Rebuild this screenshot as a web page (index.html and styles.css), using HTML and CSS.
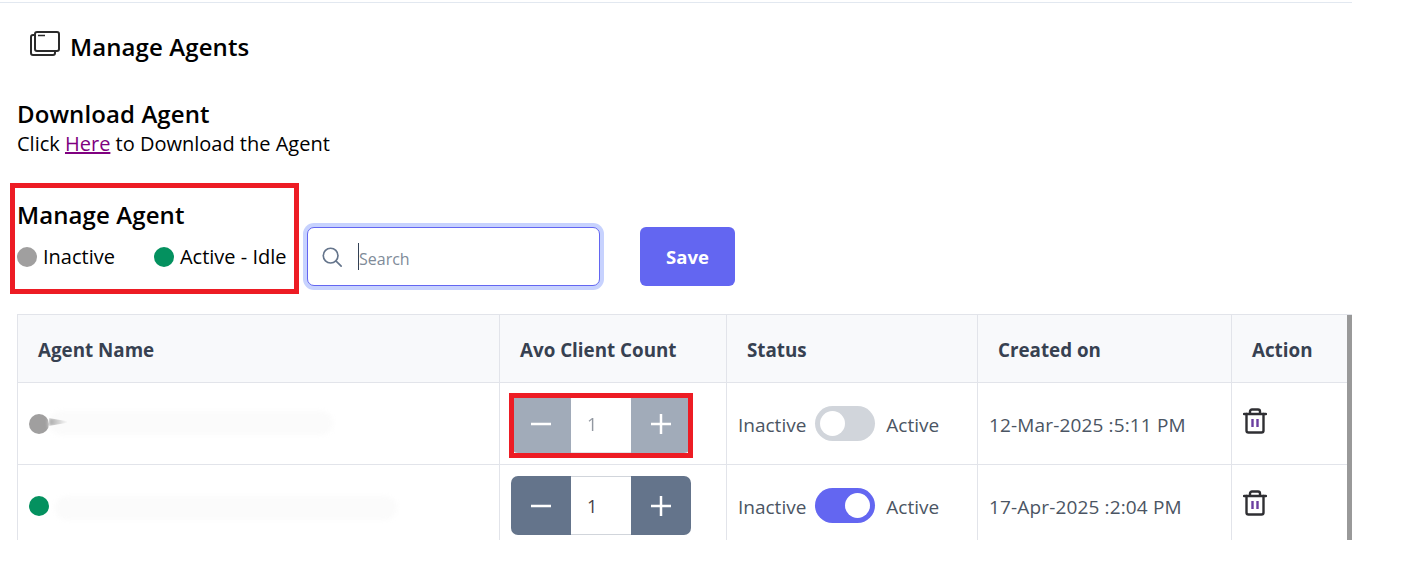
FILE: index.html
```html
<!DOCTYPE html>
<html lang="en">
<head>
<meta charset="utf-8">
<title>Manage Agents</title>
<link rel="stylesheet" href="styles.css">
</head>
<body>
<main class="page">
  <header class="title-row">
    <svg class="title-icon" viewBox="0 0 30 26" fill="none" stroke="#2b2b2b" stroke-width="2">
      <rect x="5" y="1" width="24" height="19" rx="2"/>
      <path d="M5 5h1M8 4.500h7" stroke-width="1.500"/>
      <path d="M5 4H3a2 2 0 0 0-2 2v16a2 2 0 0 0 2 2h20a2 2 0 0 0 2-2v-2"/>
    </svg>
    <h1 class="title">Manage Agents</h1>
  </header>

  <section class="download">
    <h2 class="heading">Download Agent</h2>
    <p class="download-text">Click <a class="link" href="#">Here</a> to Download the Agent</p>
  </section>

  <section class="toolbar">
    <div class="legend-block">
      <span class="annotation annotation-legend"></span>
      <h2 class="heading">Manage Agent</h2>
      <div class="legend">
        <span class="legend-item"><i class="dot dot-grey"></i>Inactive</span>
        <span class="legend-item"><i class="dot dot-green"></i>Active - Idle</span>
      </div>
    </div>
    <label class="search">
      <svg class="search-icon" viewBox="0 0 24 24" fill="none" stroke="#64748b" stroke-width="1.800" stroke-linecap="round">
        <circle cx="10.500" cy="10.500" r="8"/>
        <path d="M16.500 16.500 22 22"/>
      </svg>
      <span class="caret"></span>
      <input class="search-input" type="text" placeholder="Search">
    </label>
    <button class="save" type="button">Save</button>
  </section>

  <section class="table">
    <div class="row row-head">
      <div class="cell head">Agent Name</div>
      <div class="cell head">Avo Client Count</div>
      <div class="cell head">Status</div>
      <div class="cell head">Created on</div>
      <div class="cell head">Action</div>
    </div>

    <div class="row row-one">
      <div class="cell name">
        <i class="dot dot-grey"></i>
        <span class="smear smear-a"></span>
        <span class="smudge"></span>
      </div>
      <div class="cell count">
        <span class="annotation annotation-stepper"></span>
        <div class="stepper stepper-off">
          <button class="step" type="button"><svg viewBox="0 0 20 20"><path d="M0 10h20"/></svg></button>
          <span class="step-value">1</span>
          <button class="step" type="button"><svg viewBox="0 0 20 20"><path d="M0 10h20M10 0v20"/></svg></button>
        </div>
      </div>
      <div class="cell status">
        <span class="status-label">Inactive</span>
        <span class="toggle"><span class="knob"></span></span>
        <span class="status-label">Active</span>
      </div>
      <div class="cell date">12-Mar-2025 :5:11 PM</div>
      <div class="cell action">
        <svg class="trash" viewBox="0 0 24 26" fill="none" stroke="#2f2f33" stroke-width="2.400" stroke-linecap="round" stroke-linejoin="round">
          <path d="M1 6h22M7 6V3.500A2 2 0 0 1 9 1.500h6a2 2 0 0 1 2 2V6"/>
          <path d="M3.500 6v16.500a2 2 0 0 0 2 2h13a2 2 0 0 0 2-2V6"/>
          <path d="M9.500 11v8M14.500 11v8" stroke="#6b3fa0" stroke-linecap="butt"/>
        </svg>
      </div>
    </div>

    <div class="row row-two">
      <div class="cell name">
        <i class="dot dot-green"></i>
        <span class="smear smear-b"></span>
      </div>
      <div class="cell count">
        <div class="stepper">
          <button class="step" type="button"><svg viewBox="0 0 20 20"><path d="M0 10h20"/></svg></button>
          <span class="step-value step-value-on">1</span>
          <button class="step" type="button"><svg viewBox="0 0 20 20"><path d="M0 10h20M10 0v20"/></svg></button>
        </div>
      </div>
      <div class="cell status">
        <span class="status-label">Inactive</span>
        <span class="toggle toggle-on"><span class="knob"></span></span>
        <span class="status-label">Active</span>
      </div>
      <div class="cell date">17-Apr-2025 :2:04 PM</div>
      <div class="cell action">
        <svg class="trash" viewBox="0 0 24 26" fill="none" stroke="#2f2f33" stroke-width="2.400" stroke-linecap="round" stroke-linejoin="round">
          <path d="M1 6h22M7 6V3.500A2 2 0 0 1 9 1.500h6a2 2 0 0 1 2 2V6"/>
          <path d="M3.500 6v16.500a2 2 0 0 0 2 2h13a2 2 0 0 0 2-2V6"/>
          <path d="M9.500 11v8M14.500 11v8" stroke="#6b3fa0" stroke-linecap="butt"/>
        </svg>
      </div>
    </div>
    <span class="scrollbar"></span>
  </section>
</main>
</body>
</html>
```

FILE: styles.css
```css
* { box-sizing: border-box; }
html, body { margin: 0; padding: 0; background: #fff; }
body { font-family: "Open Sans", "Noto Sans", sans-serif; color: #000; overflow: hidden; }

.page { width: 1352px; margin-top: 2px; border-top: 1px solid #e2e8f0; padding-left: 17px; }

.title-row { display: flex; align-items: center; gap: 10px; height: 56px; margin-top: 16px; padding-left: 13px; }
.title-icon { width: 30px; height: 26px; flex: none; margin-top: -6px; }
.title { margin: 0; font-size: 24px; font-weight: 600; line-height: 32px; letter-spacing: 0.1px; }

.heading { margin: 0; font-size: 24px; font-weight: 600; line-height: 32px; letter-spacing: 0.1px; }
.download { margin-top: 23px; }
.download-text { margin: 1px 0 0; font-size: 20px; line-height: 26px; }
.link { color: #800080; text-decoration: underline; }

.toolbar { display: flex; align-items: flex-start; margin-top: 40px; position: relative; }
.legend-block { position: relative; width: 290px; padding-top: 2px; }
.annotation { position: absolute; border: 5px solid #ed1c24; pointer-events: none; z-index: 2; }
.annotation-legend { left: -7px; top: -14px; width: 289px; height: 111px; }
.legend { display: flex; gap: 39px; margin-top: 13px; }
.legend-item { display: flex; align-items: center; gap: 6px; font-size: 20px; line-height: 26px; }

.dot { display: block; width: 20px; height: 20px; border-radius: 50%; flex: none; }
.dot-grey { background: #a09f9f; }
.dot-green { background: #04915f; }

.search { display: flex; align-items: center; width: 293px; height: 59px; margin-top: 30px; border: 1px solid #6366f1; border-radius: 7px; box-shadow: 0 0 0 4px #c7d2fe; background: #fff; padding-left: 14px; position: relative; }
.search-icon { width: 22px; height: 22px; flex: none; margin-left: -1px; }
.caret { width: 1px; height: 27px; background: #334155; margin-left: 15px; flex: none; }
.search-input { border: 0; outline: 0; padding: 4px 0 0; width: 200px; font: 16px "Open Sans", sans-serif; color: #374151; background: transparent; }
.search-input::placeholder { color: #808b99; opacity: 1; }

.save { width: 95px; height: 59px; margin-top: 30px; margin-left: 40px; border: 0; border-radius: 6px; background: #6366f1; color: #fff; font: 700 18.500px "Open Sans", sans-serif; }

.table { position: relative; margin-top: 28px; height: 226px; overflow: hidden; border-top: 1px solid #e2e4ea; border-left: 1px solid #e2e4ea; }
.row { display: grid; grid-template-columns: 482px 227px 251px 254px 1fr; }
.row-head { height: 68px; background: #f8f9fb; }
.row-one { height: 82px; }
.row-two { height: 82px; }
.cell { display: flex; align-items: center; border-right: 1px solid #e2e4ea; border-bottom: 1px solid #e2e4ea; position: relative; font-size: 19px; color: #4b5563; padding-left: 11px; }
.cell:last-child { border-right: 0; }
.head { padding: 2px 0 0 20px; font-weight: 700; color: #374151; font-size: 18.800px; }
.row-one .cell, .row-two .cell { align-items: flex-start; }

.name { padding-top: 31px; gap: 6px; }
.smear { display: block; height: 24px; border-radius: 12px; background: #fbfbfb; filter: blur(2px); }
.smear-a { width: 284px; margin-top: -3px; margin-left: -6px; }
.smear-b { width: 342px; }
.smudge { position: absolute; left: 31px; top: 35px; width: 18px; height: 8px; background: linear-gradient(90deg, #a8a8a8, #f8f8f8); filter: blur(1.500px); clip-path: polygon(0 0, 100% 40%, 100% 60%, 0 100%); }

.count { padding-left: 11px; padding-top: 11px; }
.stepper { display: flex; width: 180px; height: 59px; border-radius: 7px; overflow: hidden; background: #64748b; }
.stepper-off { opacity: 0.6; }
.annotation-stepper { left: 9px; top: 10px; width: 184px; height: 65px; }
.step { width: 60px; border: 0; padding: 0; background: transparent; display: flex; align-items: center; justify-content: center; }
.step svg { width: 20px; height: 20px; stroke: #fff; stroke-width: 2.500; fill: none; }
.step-value { width: 60px; background: #fff; display: flex; align-items: center; padding-left: 16px; font-size: 18px; color: #4b5563; border-top: 1px solid #d1d5db; border-bottom: 1px solid #d1d5db; }
.step-value-on { color: #4a3f48; }

.status { padding-top: 23px; line-height: 35px; }
.status-label { padding-top: 2px; }
.toggle { display: block; width: 60px; height: 35px; border-radius: 18px; background: #d1d5db; padding: 5px; flex: none; margin: 0 11px 0 9px; }
.toggle-on { background: #6366f1; padding-left: 30px; }
.knob { display: block; width: 25px; height: 25px; border-radius: 50%; background: #fff; }

.date { padding-top: 29px; line-height: 26px; letter-spacing: 0.15px; }
.action { padding-top: 25px; }
.trash { width: 24px; height: 26px; flex: none; }
.scrollbar { position: absolute; right: 0; top: 0; bottom: 0; width: 5px; background: #999; }
```
